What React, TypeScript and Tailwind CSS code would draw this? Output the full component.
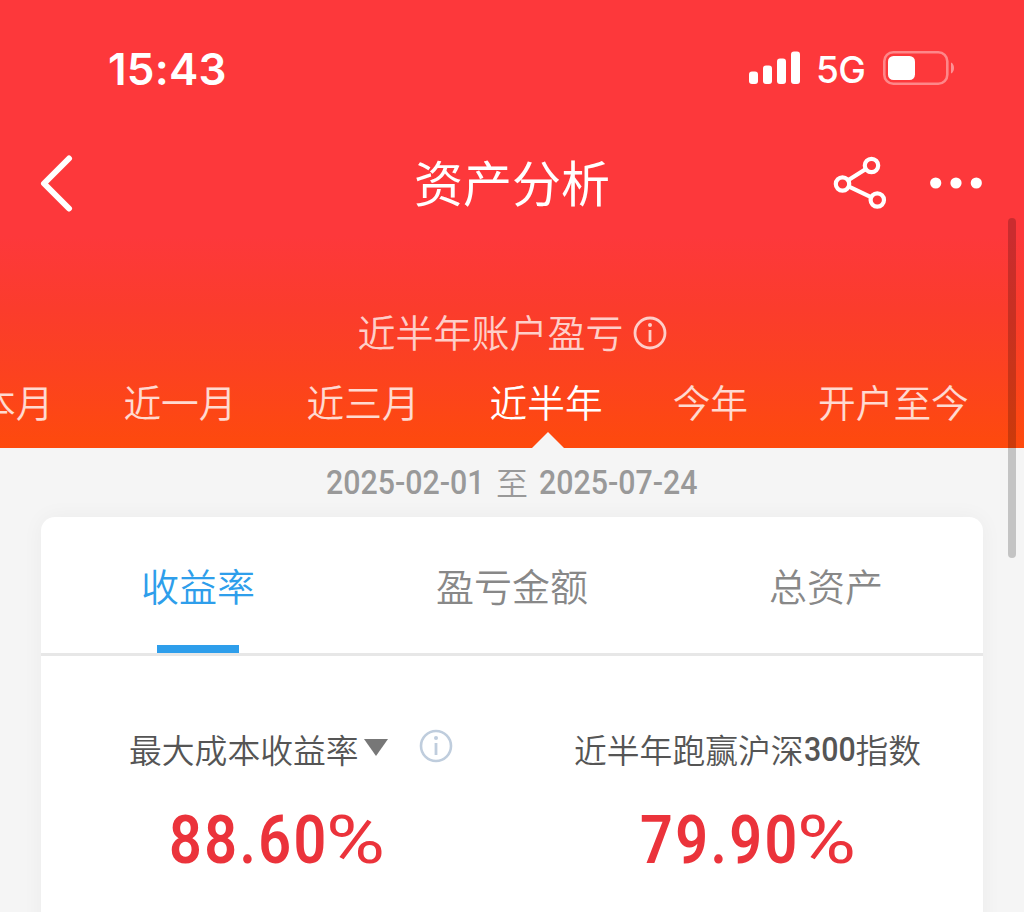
interface Period {
  label: string;
  active?: boolean;
}

interface InfoIconProps {
  size: number;
  stroke: number;
  className?: string;
}

const periods: Period[] = [
  { label: "本月" },
  { label: "近一月" },
  { label: "近三月" },
  { label: "近半年", active: true },
  { label: "今年" },
  { label: "开户至今" }
];

const tabs = ["收益率", "盈亏金额", "总资产"];

function InfoIcon({ size, stroke, className }: InfoIconProps) {
  return (
    <svg width={size} height={size} viewBox="0 0 34 34" fill="none" className={className}>
      <circle cx="17" cy="17" r="15" stroke="currentColor" strokeWidth={stroke} />
      <circle cx="17" cy="9" r="2" fill="currentColor" />
      <path d="M17 14v12" stroke="currentColor" strokeWidth="2.8" />
    </svg>
  );
}

function StatusBar() {
  return (
    <div className="flex h-[136px] items-center justify-between pl-[108px] pr-[69px]">
      <span className="pt-0.5 font-['Inter'] text-[44px] font-semibold leading-none tracking-[0.2px]">15:43</span>
      <div className="flex items-center">
        <svg width="52" height="34" viewBox="0 0 52 34" fill="currentColor">
          <rect x="0" y="20.5" width="9" height="12.5" rx="3" />
          <rect x="14" y="14.5" width="9" height="18.5" rx="3" />
          <rect x="28" y="7.5" width="9" height="25.5" rx="3" />
          <rect x="42" y="0.5" width="9" height="32.5" rx="3" />
        </svg>
        <span className="ml-[15px] w-[50px] whitespace-nowrap pt-[3px] font-['Inter'] text-[37px] font-[450] leading-none tracking-[-0.5px]">5G</span>
        <svg width="72" height="34" viewBox="0 0 72 34" className="ml-[17px]">
          <rect x="1.3" y="1.3" width="63" height="31.4" rx="9" fill="none" stroke="#fff" strokeOpacity="0.4" strokeWidth="2.6" />
          <rect x="5" y="5" width="27" height="24" rx="5.5" fill="#fff" />
          <path d="M68 11.5c4 1.6 4 9.4 0 11z" fill="#fff" fillOpacity="0.45" />
        </svg>
      </div>
    </div>
  );
}

function NavBar() {
  return (
    <div className="grid h-[94px] grid-cols-[200px_1fr_200px] items-center">
      <svg width="34" height="58" viewBox="0 0 34 58" fill="none" className="ml-[39px]">
        <path d="M30 4.5 5 29.5 30 54.5" stroke="currentColor" strokeWidth="6" strokeLinecap="round" strokeLinejoin="round" />
      </svg>
      <h1 className="pb-[5px] text-center text-[49px] font-normal leading-none">资产分析</h1>
      <div className="flex items-center pl-[9px]">
        <svg width="54" height="54" viewBox="0 0 54 54" fill="none" stroke="currentColor" strokeWidth="4.2">
          <circle cx="9.5" cy="28" r="6.7" />
          <circle cx="38.5" cy="9.5" r="6.7" />
          <circle cx="44.3" cy="44" r="6.7" />
          <path d="M15.5 24 32.5 13.3M16 30.6l22 10.5" />
        </svg>
        <svg width="52" height="12" viewBox="0 0 52 12" fill="currentColor" className="ml-[43px]">
          <circle cx="5.7" cy="6" r="5.6" />
          <circle cx="26" cy="6" r="5.6" />
          <circle cx="46.3" cy="6" r="5.6" />
        </svg>
      </div>
    </div>
  );
}

function PeriodBar() {
  return (
    <div className="flex h-[92px] gap-[70px] whitespace-nowrap pt-[26px] text-[37.7px] font-[350] leading-[38px]">
      {periods.map((period, idx) => (
        <div
          key={period.label}
          className={`relative shrink-0 ${idx === 0 ? "-ml-[22px]" : ""} ${
            period.active ? "text-white" : "text-white/80"
          }`}
        >
          {period.label}
          {period.active && (
            <svg width="32" height="16" viewBox="0 0 32 16" className="absolute bottom-0 left-[42px]">
              <path d="M0 16 16 0l16 16z" fill="#f5f5f5" />
            </svg>
          )}
        </div>
      ))}
    </div>
  );
}

function DateText({ value }: { value: string }) {
  return (
    <span className="w-[159px] whitespace-nowrap pt-0.5 font-['Roboto'] text-[33.5px] font-medium">
      <span className="inline-block origin-left scale-x-[0.905]">{value}</span>
    </span>
  );
}

function Percent({ value }: { value: string }) {
  return (
    <div className="flex items-baseline font-['Roboto'] text-[66px] leading-none text-[#eb333b]">
      <span className="w-[157px] whitespace-nowrap font-semibold">
        <span className="inline-block origin-left scale-x-[0.87] tracking-[2.8px]">{value}</span>
      </span>
      <span className="inline-block origin-left scale-x-[1.22] font-normal">%</span>
    </div>
  );
}

export default function App() {
  return (
    <div className="relative h-[912px] w-[1024px] overflow-hidden bg-[#f5f5f5] font-['Noto_Sans_CJK_SC',sans-serif]">
      <header className="h-[448px] bg-[linear-gradient(#fd383b_0px,#fd383b_236px,#fb3c2c_310px,#fc421f_375px,#fe4a0d_448px)] text-white">
        <StatusBar />
        <NavBar />
        <div className="flex h-[126px] items-center justify-center gap-[9px] pt-[79px] text-white/75">
          <span className="pb-[3px] text-[38px] font-[350] leading-none">近半年账户盈亏</span>
          <InfoIcon size={34} stroke={2.8} />
        </div>
        <PeriodBar />
      </header>

      {/* Date range */}
      <div className="flex h-[69px] items-center justify-center gap-[11px] text-[#999]">
        <DateText value="2025-02-01" />
        <span className="pb-1 text-[32px] font-[350] leading-none">至</span>
        <DateText value="2025-07-24" />
      </div>

      <main className="mx-[41px] h-[420px] rounded-t-[14px] bg-white shadow-[0_0_22px_rgba(0,0,0,0.045)]">
        <div className="grid h-[139px] grid-cols-3 border-b-[3px] border-[#e7e7e7] text-[38px] font-[350]">
          {tabs.map((tab, idx) => (
            <div
              key={tab}
              className={`flex flex-col items-center justify-between pt-[49px] leading-[38px] ${
                idx === 0 ? "text-[#2e9eeb]" : "text-[#888]"
              }`}
            >
              {tab}
              {idx === 0 && <div className="h-2 w-[82px] bg-[#2e9eeb]" />}
            </div>
          ))}
        </div>

        <div className="grid grid-cols-2 pt-[73px] text-[32.8px] text-[#555]">
          <div>
            <div className="flex h-10 items-center pl-[88px] font-[350]">
              最大成本收益率
              <svg width="24" height="17" viewBox="0 0 24 17" className="mb-1 ml-[5px]">
                <path d="M0 0h24L12 17z" fill="#777" />
              </svg>
              <InfoIcon size={34} stroke={2.6} className="mb-1.5 ml-[31px] text-[#bfcddd]" />
            </div>
            <div className="pl-[128px] pt-[39px]">
              <Percent value="88.60" />
            </div>
          </div>
          <div>
            <div className="flex h-10 items-center pl-[62px] font-[350]">
              近半年跑赢沪深
              <span className="w-[52px] whitespace-nowrap pt-0.5 font-['Roboto'] text-[33.5px] font-medium">
                <span className="inline-block origin-left scale-x-[0.905]">300</span>
              </span>
              指数
            </div>
            <div className="pl-[128px] pt-[39px]">
              <Percent value="79.90" />
            </div>
          </div>
        </div>
      </main>

      {/* Scroll indicator floats over the page */}
      <div className="absolute right-2 top-[218px] h-[340px] w-2 rounded-full bg-black/20" />
    </div>
  );
}
